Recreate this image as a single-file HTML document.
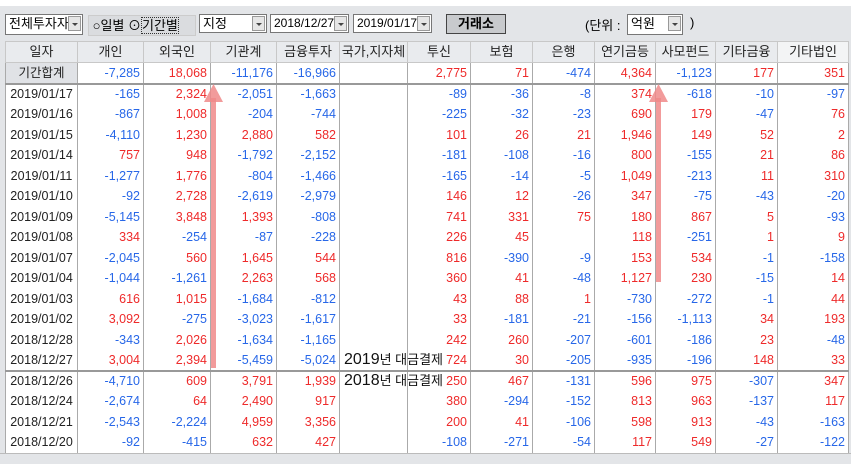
<!DOCTYPE html>
<html><head><meta charset="utf-8"><style>
body{margin:0;width:851px;height:462px;background:#fff;font-family:"Liberation Sans","Noto Sans CJK KR",sans-serif;font-size:12px;position:relative;overflow:hidden}
.bar{position:absolute;left:0;top:6px;width:851px;height:456px;background:#e3e5e8}
.a{position:absolute}
.cb{position:absolute;height:19px;border:1px solid #777;background:#fff;box-sizing:border-box;font-size:13px;line-height:17px;padding-left:3px;white-space:nowrap;overflow:hidden}
.cb i{position:absolute;right:1px;top:1px;width:13px;height:15px;background:#e6e6e6;border:1px solid #999;box-sizing:border-box}
.cb i:after{content:"";position:absolute;left:3px;top:6px;border:3px solid transparent;border-top:3px solid #444}
table{position:absolute;left:5px;top:41px;border-collapse:collapse;table-layout:fixed;background:#fff}
td{border-left:1px solid #aaa;border-right:1px solid #aaa;padding:0 3px 0 0;text-align:right;height:20.5px;line-height:16px;white-space:nowrap;overflow:hidden;font-size:12.5px;box-sizing:border-box}
tr.h td{background:#e9ebee;text-align:center;color:#222;border:1px solid #c8c8c8;height:21px;font-size:13px;padding:0}
tr.s td{height:21px;border-bottom:2px solid #999}
td:first-child{text-align:center;padding:0;color:#222}
tr.s td:first-child{background:#e0e2e6}
.r{color:#ee2a2a}.b{color:#2767e8}
tr.sep td{border-bottom:2px solid #999}
</style></head><body>
<div class="bar"></div>
<div class="cb" style="left:5px;top:14px;width:78px;height:21px">전체투자자<i></i></div>
<div class="a" style="left:88px;top:15px;width:106px;height:19px;background:#dadcdf;border:1px solid #ccc;font-size:13px;line-height:19px">&nbsp;○일별 ⊙<span style="border:1px dotted #333">기간별</span></div>
<div class="cb" style="left:199px;top:14px;width:68px">지정<i></i></div>
<div class="cb" style="left:270px;top:14px;width:79px;font-size:12px">2018/12/27<i></i></div>
<div class="cb" style="left:353px;top:14px;width:79px;font-size:12px">2019/01/17<i></i></div>
<div class="a" style="left:446px;top:14px;width:60px;height:20px;background:#c8cacd;border:1px solid #444;box-sizing:border-box;text-align:center;font-weight:bold;font-size:13px;line-height:18px">거래소</div>
<div class="a" style="left:585px;top:15px;font-size:13px">(단위 :</div>
<div class="cb" style="left:627px;top:14px;width:56px;height:21px">억원<i></i></div>
<div class="a" style="left:690px;top:15px;font-size:13px">)</div>
<table>
<colgroup><col style="width:72px"><col style="width:66px"><col style="width:67px"><col style="width:66px"><col style="width:63px"><col style="width:68px"><col style="width:63px"><col style="width:62px"><col style="width:62px"><col style="width:61px"><col style="width:60px"><col style="width:62px"><col style="width:71px"></colgroup>
<tr class="h"><td>일자</td><td>개인</td><td>외국인</td><td>기관계</td><td>금융투자</td><td>국가,지자체</td><td>투신</td><td>보험</td><td>은행</td><td>연기금등</td><td>사모펀드</td><td>기타금융</td><td style="background:#f3f4f5">기타법인</td></tr>
<tr class="s"><td>기간합계</td><td class="b">-7,285</td><td class="r">18,068</td><td class="b">-11,176</td><td class="b">-16,966</td><td></td><td class="r">2,775</td><td class="r">71</td><td class="b">-474</td><td class="r">4,364</td><td class="b">-1,123</td><td class="r">177</td><td class="r">351</td></tr>
<tr><td>2019/01/17</td><td class="b">-165</td><td class="r">2,324</td><td class="b">-2,051</td><td class="b">-1,663</td><td></td><td class="b">-89</td><td class="b">-36</td><td class="b">-8</td><td class="r">374</td><td class="b">-618</td><td class="b">-10</td><td class="b">-97</td></tr>
<tr><td>2019/01/16</td><td class="b">-867</td><td class="r">1,008</td><td class="b">-204</td><td class="b">-744</td><td></td><td class="b">-225</td><td class="b">-32</td><td class="b">-23</td><td class="r">690</td><td class="r">179</td><td class="b">-47</td><td class="r">76</td></tr>
<tr><td>2019/01/15</td><td class="b">-4,110</td><td class="r">1,230</td><td class="r">2,880</td><td class="r">582</td><td></td><td class="r">101</td><td class="r">26</td><td class="r">21</td><td class="r">1,946</td><td class="r">149</td><td class="r">52</td><td class="r">2</td></tr>
<tr><td>2019/01/14</td><td class="r">757</td><td class="r">948</td><td class="b">-1,792</td><td class="b">-2,152</td><td></td><td class="b">-181</td><td class="b">-108</td><td class="b">-16</td><td class="r">800</td><td class="b">-155</td><td class="r">21</td><td class="r">86</td></tr>
<tr><td>2019/01/11</td><td class="b">-1,277</td><td class="r">1,776</td><td class="b">-804</td><td class="b">-1,466</td><td></td><td class="b">-165</td><td class="b">-14</td><td class="b">-5</td><td class="r">1,049</td><td class="b">-213</td><td class="r">11</td><td class="r">310</td></tr>
<tr><td>2019/01/10</td><td class="b">-92</td><td class="r">2,728</td><td class="b">-2,619</td><td class="b">-2,979</td><td></td><td class="r">146</td><td class="r">12</td><td class="b">-26</td><td class="r">347</td><td class="b">-75</td><td class="b">-43</td><td class="b">-20</td></tr>
<tr><td>2019/01/09</td><td class="b">-5,145</td><td class="r">3,848</td><td class="r">1,393</td><td class="b">-808</td><td></td><td class="r">741</td><td class="r">331</td><td class="r">75</td><td class="r">180</td><td class="r">867</td><td class="r">5</td><td class="b">-93</td></tr>
<tr><td>2019/01/08</td><td class="r">334</td><td class="b">-254</td><td class="b">-87</td><td class="b">-228</td><td></td><td class="r">226</td><td class="r">45</td><td></td><td class="r">118</td><td class="b">-251</td><td class="r">1</td><td class="r">9</td></tr>
<tr><td>2019/01/07</td><td class="b">-2,045</td><td class="r">560</td><td class="r">1,645</td><td class="r">544</td><td></td><td class="r">816</td><td class="b">-390</td><td class="b">-9</td><td class="r">153</td><td class="r">534</td><td class="b">-1</td><td class="b">-158</td></tr>
<tr><td>2019/01/04</td><td class="b">-1,044</td><td class="b">-1,261</td><td class="r">2,263</td><td class="r">568</td><td></td><td class="r">360</td><td class="r">41</td><td class="b">-48</td><td class="r">1,127</td><td class="r">230</td><td class="b">-15</td><td class="r">14</td></tr>
<tr><td>2019/01/03</td><td class="r">616</td><td class="r">1,015</td><td class="b">-1,684</td><td class="b">-812</td><td></td><td class="r">43</td><td class="r">88</td><td class="r">1</td><td class="b">-730</td><td class="b">-272</td><td class="b">-1</td><td class="r">44</td></tr>
<tr><td>2019/01/02</td><td class="r">3,092</td><td class="b">-275</td><td class="b">-3,023</td><td class="b">-1,617</td><td></td><td class="r">33</td><td class="b">-181</td><td class="b">-21</td><td class="b">-156</td><td class="b">-1,113</td><td class="r">34</td><td class="r">193</td></tr>
<tr><td>2018/12/28</td><td class="b">-343</td><td class="r">2,026</td><td class="b">-1,634</td><td class="b">-1,165</td><td></td><td class="r">242</td><td class="r">260</td><td class="b">-207</td><td class="b">-601</td><td class="b">-186</td><td class="r">23</td><td class="b">-48</td></tr>
<tr class="sep"><td>2018/12/27</td><td class="r">3,004</td><td class="r">2,394</td><td class="b">-5,459</td><td class="b">-5,024</td><td></td><td class="r">724</td><td class="r">30</td><td class="b">-205</td><td class="b">-935</td><td class="b">-196</td><td class="r">148</td><td class="r">33</td></tr>
<tr><td>2018/12/26</td><td class="b">-4,710</td><td class="r">609</td><td class="r">3,791</td><td class="r">1,939</td><td></td><td class="r">250</td><td class="r">467</td><td class="b">-131</td><td class="r">596</td><td class="r">975</td><td class="b">-307</td><td class="r">347</td></tr>
<tr><td>2018/12/24</td><td class="b">-2,674</td><td class="r">64</td><td class="r">2,490</td><td class="r">917</td><td></td><td class="r">380</td><td class="b">-294</td><td class="b">-152</td><td class="r">813</td><td class="r">963</td><td class="b">-137</td><td class="r">117</td></tr>
<tr><td>2018/12/21</td><td class="b">-2,543</td><td class="b">-2,224</td><td class="r">4,959</td><td class="r">3,356</td><td></td><td class="r">200</td><td class="r">41</td><td class="b">-106</td><td class="r">598</td><td class="r">913</td><td class="b">-43</td><td class="b">-163</td></tr>
<tr><td>2018/12/20</td><td class="b">-92</td><td class="b">-415</td><td class="r">632</td><td class="r">427</td><td></td><td class="b">-108</td><td class="b">-271</td><td class="b">-54</td><td class="r">117</td><td class="r">549</td><td class="b">-27</td><td class="b">-122</td></tr>
</table>
<div class="a" style="left:0;top:453px;width:851px;height:10px;background:#e3e5e8;border-top:1px solid #bbb"></div>
<div class="a" style="left:344px;top:350px;font-size:16px;line-height:20px;color:#111">2019<span style="font-size:13px">년 대금결제</span></div>
<div class="a" style="left:344px;top:371px;font-size:16px;line-height:20px;color:#111">2018<span style="font-size:13px">년 대금결제</span></div>
<svg class="a" style="left:0;top:0" width="851" height="462">
<rect x="211" y="98" width="5" height="270" fill="#f08a8a" opacity=".85"/>
<polygon points="204,102 213.5,84 223,102" fill="#f08a8a" opacity=".85"/>
<rect x="656" y="98" width="5" height="184" fill="#f08a8a" opacity=".85"/>
<polygon points="649,102 658.5,84 668,102" fill="#f08a8a" opacity=".85"/>
</svg>
</body></html>
